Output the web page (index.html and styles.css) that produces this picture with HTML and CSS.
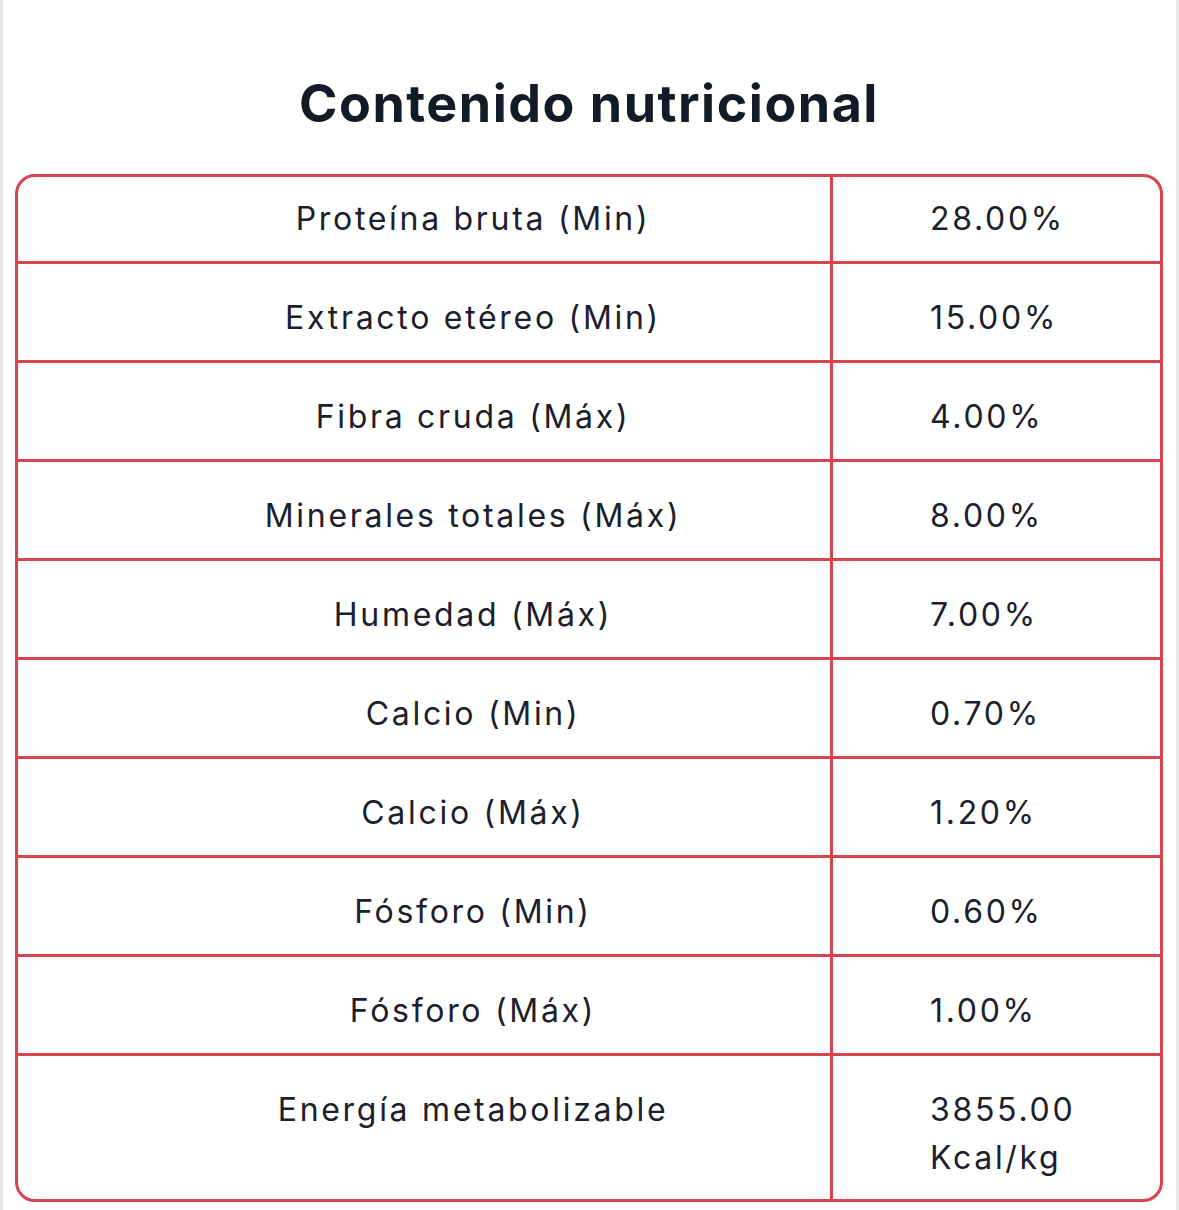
FILE: index.html
```html
<!DOCTYPE html>
<html lang="es">
<head>
<meta charset="utf-8">
<title>Contenido nutricional</title>
<link rel="stylesheet" href="styles.css">
</head>
<body>
<main class="page">
  <h1 class="title">Contenido nutricional</h1>
  <div class="table">
    <div class="row first"><div class="label">Proteína bruta (Min)</div><div class="value">28.00%</div></div>
    <div class="row"><div class="label">Extracto etéreo (Min)</div><div class="value">15.00%</div></div>
    <div class="row"><div class="label">Fibra cruda (Máx)</div><div class="value">4.00%</div></div>
    <div class="row"><div class="label">Minerales totales (Máx)</div><div class="value">8.00%</div></div>
    <div class="row"><div class="label">Humedad (Máx)</div><div class="value">7.00%</div></div>
    <div class="row"><div class="label">Calcio (Min)</div><div class="value">0.70%</div></div>
    <div class="row"><div class="label">Calcio (Máx)</div><div class="value">1.20%</div></div>
    <div class="row"><div class="label">Fósforo (Min)</div><div class="value">0.60%</div></div>
    <div class="row"><div class="label">Fósforo (Máx)</div><div class="value">1.00%</div></div>
    <div class="row last"><div class="label">Energía metabolizable</div><div class="value">3855.00<br>Kcal/kg</div></div>
  </div>
</main>
</body>
</html>
```

FILE: styles.css
```css
html, body {
  margin: 0;
  padding: 0;
}
body {
  background: #e6e8eb;
  padding: 0 3px;
  font-family: Inter, "Liberation Sans", sans-serif;
  color: #1b202c;
}
.page {
  background: #ffffff;
  min-height: 1210px;
  padding: 73px 13px 0 12px;
  box-sizing: border-box;
}
.title {
  margin: 0 0 39px;
  text-align: center;
  font-size: 52px;
  line-height: 62px;
  font-weight: 700;
  letter-spacing: 1.5px;
  color: #131a28;
}
.table {
  border: 3px solid #d8444e;
  border-radius: 20px;
  overflow: hidden;
}
.row {
  display: grid;
  grid-template-columns: 815px 1fr;
  border-bottom: 3px solid #d8444e;
  font-size: 32px;
  line-height: 48px;
  letter-spacing: 2.7px;
}
.row.last {
  border-bottom: 0;
}
.label, .value {
  padding: 30px 0 18px 98px;
}
.label {
  border-right: 3px solid #d8444e;
  text-align: center;
}
.value {
  padding-left: 97px;
  text-align: left;
}
.row.first .label, .row.first .value {
  padding-top: 18px;
}
.row.last .label, .row.last .value {
  padding-bottom: 17px;
}
```
